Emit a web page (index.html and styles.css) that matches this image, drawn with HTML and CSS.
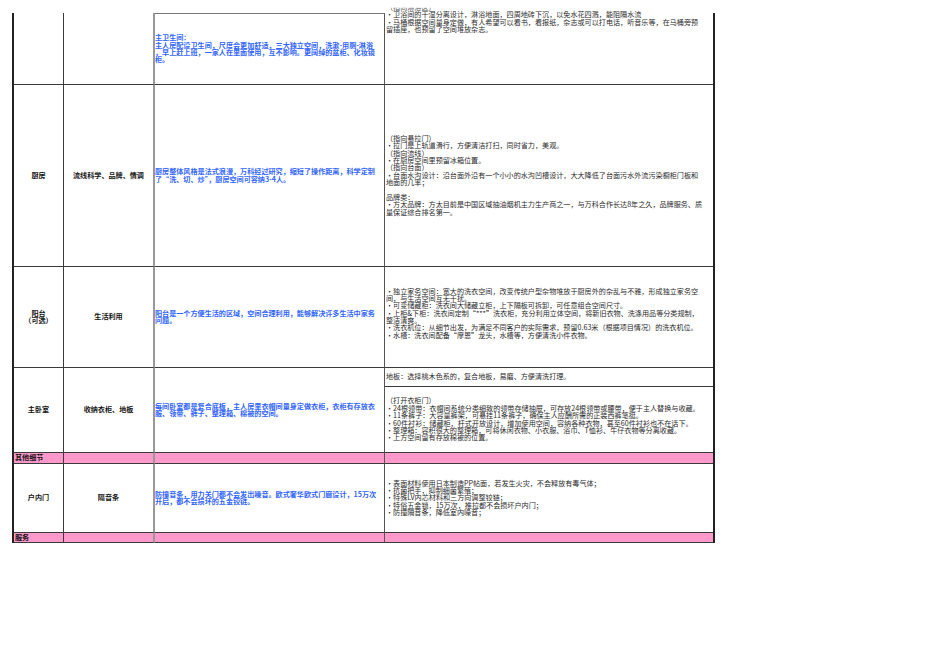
FILE: index.html
```html
<!DOCTYPE html>
<html lang="zh-CN">
<head>
<meta charset="utf-8">
<title>户型细节说明</title>
<link rel="stylesheet" href="styles.css">
</head>
<body>
<div class="sheet">
  <!-- 主卫生间 -->
  <div class="c ca"></div>
  <div class="c cb"></div>
  <div class="c cc topline">主卫生间：<br>主人房配设卫生间，尺度会更加舒适，三大独立空间，洗漱-用厕-淋浴<br>，早上赶上班，一家人在里面使用，互不影响。更阔绰的盆柜、化妆镜<br>柜。</div>
  <div class="c cd first"><div class="lift"><span class="frag">（指向淋浴区）</span><br>•卫浴间的干湿分离设计，淋浴地面，四周地砖下沉，以免水花四溅，能阻隔水流<br>•马桶根据空间量身定做，有人希望可以看书，看报纸，杂志或可以打电话，听音乐等，在马桶旁预<br>留插座，也预留了空间堆放杂志。</div></div>

  <!-- 厨房 -->
  <div class="c ca">厨房</div>
  <div class="c cb">流线科学、品牌、情调</div>
  <div class="c cc">厨房整体风格是法式浪漫，万科经过研究，缩短了操作距离，科学定制<br>了“洗、切、炒”，厨房空间可容纳3-4人。</div>
  <div class="c cd">（指向悬拉门）<br>•拉门是上轨道滑行，方便清洁打扫，同时省力，美观。<br>（指向流线）<br>•在厨房空间里预留冰箱位置。<br>（指向台面）<br>•台面水沟设计：沿台面外沿有一个小小的水沟凹槽设计，大大降低了台面污水外流污染橱柜门板和<br>地面的几率；<br>&nbsp;<br>品牌类：<br>•方太品牌：方太目前是中国区域抽油烟机主力生产商之一，与万科合作长达8年之久，品牌服务、质<br>量保证综合排名第一。</div>

  <!-- 阳台 -->
  <div class="c ca">阳台<br>（可选）</div>
  <div class="c cb">生活利用</div>
  <div class="c cc">阳台是一个方便生活的区域，空间合理利用，能够解决许多生活中家务<br>问题。</div>
  <div class="c cd">•独立家务空间：宽大的洗衣空间，改变传统户型杂物堆放于厨房外的杂乱与不雅，形成独立家务空<br>间，与生活空间互无干扰。<br>•可变储藏柜：洗衣间大储藏立柜，上下隔板可拆卸，可任意组合空间尺寸。<br>•上柜&amp;下柜：洗衣间定制“***”洗衣柜，充分利用立体空间，将新旧衣物、洗涤用品等分类规制，<br>整洁清爽。<br>•洗衣机位：从细节出发，为满足不同客户的实际需求，预留0.63米（根据项目情况）的洗衣机位。<br>•水槽：洗衣间配备“摩恩”龙头，水槽等，方便清洗小件衣物。<br>&nbsp;</div>

  <!-- 主卧室 -->
  <div class="c ca">主卧室</div>
  <div class="c cb">收纳衣柜、地板</div>
  <div class="c cc">每间卧室都是复合底板，主人房里衣帽间量身定做衣柜，衣柜有存放衣<br>服、领带、裤子、整理箱、棉被的空间。</div>
  <div class="c cd split">
    <div class="sub sub-top">地板：选择桃木色系的，复合地板，易磨、方便清洗打理。</div>
    <div class="sub sub-main">（打开衣柜门）<br>•24根领带：衣帽间系统分类细致的领带存储抽屉，可存放24根领带或腰带，便于主人替换与收藏。<br>•11条裤子：大容量裤架，可悬挂11条裤子，确保主人应酬所需的正装西裤笔挺。<br>•60件衬衫：储藏柜，杆式开放设计，增加使用空间，容纳各种衣物，甚至60件衬衫也不在话下。<br>•整理箱：容积很大的整理箱，可将休闲衣物、小衣服、浴巾、T恤衫、牛仔衣物等分离收藏。<br>•上方空间留有存放棉被的位置。</div>
  </div>

  <!-- 其他细节 -->
  <div class="c ca pink label">其他细节</div>
  <div class="c cb pink"></div>
  <div class="c cc pink"></div>
  <div class="c cd pink"></div>

  <!-- 户内门 -->
  <div class="c ca">户内门</div>
  <div class="c cb">隔音条</div>
  <div class="c cc">防撞音条，用力关门都不会发出噪音。欧式奢华欧式门廊设计，15万次<br>开启，都不会损坏的五金铰链。</div>
  <div class="c cd">•表面材料使用日本制造PP帖面，若发生火灾，不会释放有毒气体；<br>•抗菌把手，抑制细菌繁殖；<br>•特殊LV内芯材料和三方向调整铰链；<br>•特俗五金锁，15万次，推拉都不会损坏户内门；<br>•防撞隔音条，降低室内噪音；</div>

  <!-- 服务 -->
  <div class="c ca pink label">服务</div>
  <div class="c cb pink"></div>
  <div class="c cc pink"></div>
  <div class="c cd pink"></div>
</div>
</body>
</html>
```
FILE: styles.css
```css
html, body {
  margin: 0;
  padding: 0;
  background: #ffffff;
}

body {
  font-family: "Noto Sans CJK SC", "Noto Sans", sans-serif;
}

.sheet {
  margin: 13px 0 0 12px;
  width: 699px;
  display: grid;
  grid-template-columns: 50px 91px 230px 328px;
  grid-template-rows: 72px 182px 101px 85px 11px 69px 10px;
  border-left: 2px solid #222;
  border-right: 2px solid #222;
}

.c {
  box-sizing: border-box;
  border-right: 1px solid #3a3a3a;
  border-bottom: 1px solid #3a3a3a;
  display: flex;
  flex-direction: column;
  justify-content: center;
  overflow: hidden;
  font-size: 7.1px;
  line-height: 7.35px;
  white-space: nowrap;
}

.ca, .cb {
  align-items: center;
  text-align: center;
  font-weight: 700;
  color: #141414;
}

.cb {
  border-right: 2px solid #999;
}

.cc {
  color: #3366ff;
  font-weight: 700;
  padding-left: 0;
  border-right: 1px solid #555;
}

.cc.topline {
  border-top: 1px solid #777;
}

.cd {
  border-right: none;
  color: #2a2a2a;
  padding-left: 1px;
}

.cd.first {
  justify-content: flex-start;
  overflow: visible;
}

.lift {
  margin-top: -9px;
}

.frag {
  display: inline-block;
  clip-path: inset(50% 0 0 0);
  color: #555;
}

.cd.split {
  justify-content: stretch;
  padding-left: 0;
}

.sub {
  display: flex;
  flex-direction: column;
  justify-content: center;
  padding-left: 1px;
}

.sub-top {
  height: 19px;
  box-sizing: border-box;
  border-bottom: 1px solid #3a3a3a;
}

.sub-main {
  flex: 1;
}

.pink {
  background: #ff99cc;
}

.ca.label {
  align-items: flex-start;
  text-align: left;
  padding-left: 1px;
}
```
